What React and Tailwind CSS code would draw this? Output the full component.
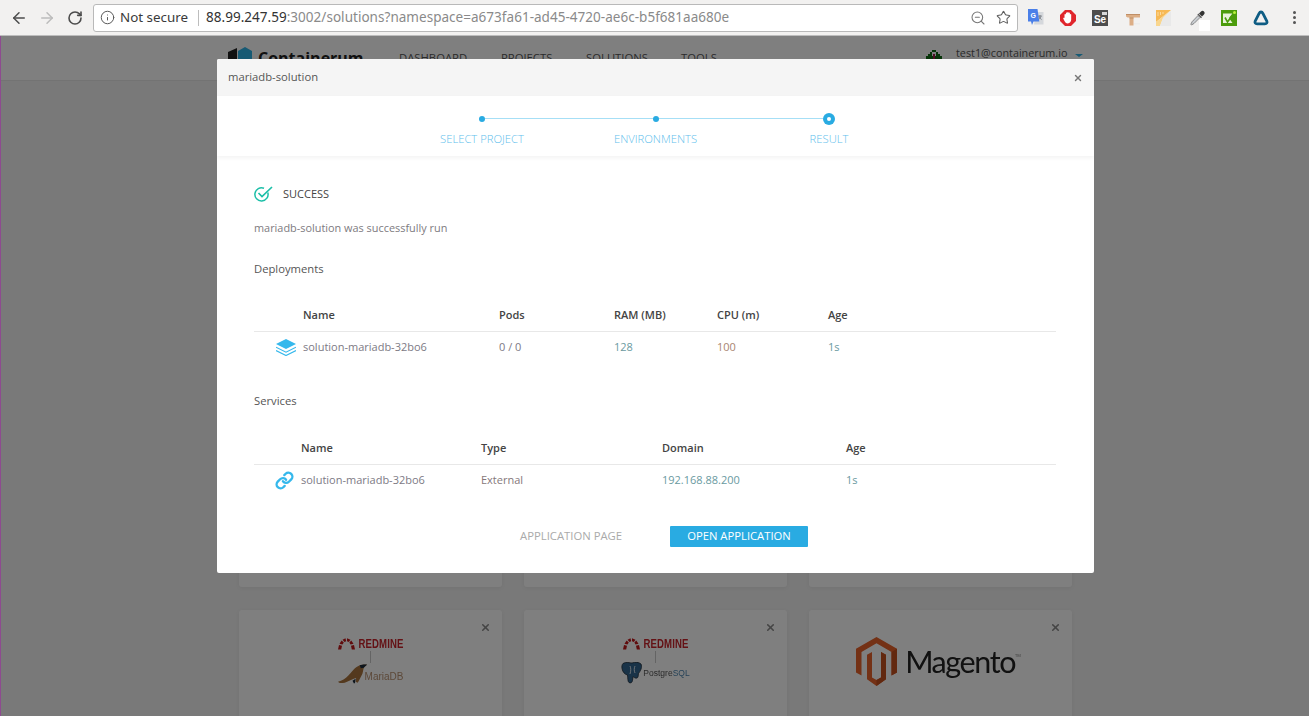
import { ArrowLeft, ArrowRight, RotateCw, Info, ZoomOut, Star, X, Link } from 'lucide-react'

const NAV = [
  { label: 'DASHBOARD', cls: 'w-[102px]' },
  { label: 'PROJECTS', cls: 'w-[85px]' },
  { label: 'SOLUTIONS', cls: 'w-[95px]' },
  { label: 'TOOLS', cls: 'w-[60px]' },
]

const STEPS = [
  { label: 'SELECT PROJECT', left: false, right: true },
  { label: 'ENVIRONMENTS', left: true, right: true },
  { label: 'RESULT', left: true, right: false, current: true },
]

function Extensions() {
  return (
    <div className="flex items-center ml-[10px] relative">
      {/* translate */}
      <svg width="16" height="17" viewBox="0 0 16 17">
        <path d="M8 3h7.500v12.500H6z" fill="#d5d8dc" />
        <path d="M10.200 7h3.600M12 6v1M11 7c.3 1.600 1.300 3 2.600 3.600M13 7c-.3 1.600-1.200 3-2.600 3.600" stroke="#7b8087" strokeWidth="0.9" fill="none" />
        <path d="M0 0h9.500l1.800 12.500H5.500L4 16l-1-3.500H0z" fill="#4a7fe8" />
        <text x="2.600" y="9" fontSize="7" fontWeight="700" fill="#fff" fontFamily="'Liberation Sans', sans-serif">G</text>
      </svg>
      {/* blocker */}
      <svg width="16" height="16" viewBox="0 0 16 16" className="ml-[16px]">
        <path d="M5 0h6l5 5v6l-5 5H5l-5-5V5z" fill="#e0262c" />
        <path d="M4.500 8V4.600c0-.9 1.400-.9 1.400 0V3.200c0-.9 1.300-.9 1.300 0V2.600c0-.9 1.400-.9 1.400 0v.6c0-.9 1.300-.9 1.300 0v1.400c0-.9 1.300-.9 1.300 0v5c0 2.200-1.500 3.800-3.400 3.800-1.700 0-2.600-.9-3.300-2.400L3.300 8.800c-.4-.9.700-1.500 1.200-.8z" fill="#fff" />
      </svg>
      {/* selenium */}
      <div className="ml-[16px] w-4 h-4 bg-[#4d4d4d] relative flex items-end justify-center overflow-hidden">
        <span className="text-white text-[10px] leading-[13px] font-bold font-['Liberation_Sans',sans-serif]">Se</span>
        <span className="absolute right-[1px] top-[2px] w-[5px] h-[3px] bg-[#d9d9d9]" />
      </div>
      {/* wood sign */}
      <svg width="16" height="16" viewBox="0 0 16 16" className="ml-[17px]">
        <path d="M1 4h14v3.500H8.500v8H4.500v-8H2.500L1 6.500z" fill="#dcae86" />
        <path d="M1 4h14v1H1zM4.500 7.500h4v1h-4z" fill="#c08f66" />
        <path d="M9 13h6v1.500H9z" fill="#ececec" />
      </svg>
      {/* notes */}
      <svg width="16" height="16" viewBox="0 0 16 16" className="ml-[15px]">
        <path d="M0 0h15L0 12z" fill="#f7b955" />
        <path d="M0 12 15 0l-8 8-3 8H0z" fill="#f9d68e" />
        <path d="M15 1v15H4l3-8z" fill="#e9e9e9" />
        <path d="M2 2v4M4.500 2v3M7 2v2" stroke="#fbe2b5" strokeWidth="0.8" />
      </svg>
      {/* eyedropper */}
      <svg width="16" height="16" viewBox="0 0 16 16" className="ml-[18px]">
        <path d="M11 1.500a2 2 0 0 1 3 3l-2 2-3-3z" fill="#333" />
        <path d="M8.400 3.600l3.600 3.600-1 1-3.600-3.600z" fill="#555" />
        <path d="M8 5.500 10 7.500 4 13.500 1.500 15 .8 14.200 2.200 11.600z" fill="#c9cdd1" stroke="#666" strokeWidth="0.7" />
      </svg>
      <span className="absolute left-[171px] top-[11px] w-[11px] h-[11px] bg-white" />
      {/* green tick */}
      <svg width="16" height="16" viewBox="0 0 16 16" className="ml-[15px]">
        <rect width="16" height="16" fill="#4c9c0c" />
        <path d="M2 3.500h9.500L8 8l3.500 5H2z" fill="#e8f3da" />
        <path d="M4 7.500 6.500 12 13 3" fill="none" stroke="#4c9c0c" strokeWidth="1.600" />
        <circle cx="13.500" cy="2.500" r="1.500" fill="#b8f03c" />
      </svg>
      {/* triangle */}
      <svg width="16" height="16" viewBox="0 0 16 16" className="ml-[16px]">
        <path d="M8 2c1 0 1.500.6 2 1.600l3.800 7.400c.7 1.500-.1 2.800-1.900 2.800H4.100c-1.800 0-2.600-1.300-1.900-2.800L6 3.600C6.500 2.600 7 2 8 2z" fill="none" stroke="#0f5d84" strokeWidth="2.800" />
      </svg>
      {/* menu */}
      <div className="ml-[24px] flex flex-col gap-[2px]">
        <span className="w-[3px] h-[3px] rounded-full bg-[#555]" />
        <span className="w-[3px] h-[3px] rounded-full bg-[#555]" />
        <span className="w-[3px] h-[3px] rounded-full bg-[#555]" />
      </div>
    </div>
  )
}

function BrowserBar() {
  return (
    <div className="h-9 bg-[#f2f1f0] border-b border-[#bdbdbd] flex items-center font-['Noto_Sans',sans-serif]">
      <ArrowLeft size={18} strokeWidth={2} className="ml-[10px] text-[#4c4c4c]" />
      <ArrowRight size={18} strokeWidth={2} className="ml-[10px] text-[#bcbcbc]" />
      <RotateCw size={16} strokeWidth={2.4} className="ml-[11px] text-[#4c4c4c]" />
      <div className="ml-[10px] w-[925px] h-[28px] bg-white border border-[#b9b9b9] rounded-[3px] flex items-center">
        <Info size={15} strokeWidth={1.6} className="ml-[6px] text-[#5a5a5a]" />
        <span className="ml-[5px] text-[13.4px] text-[#3a3a3a] w-[78px]">Not secure</span>
        <span className="w-px h-[16px] bg-[#bdbdbd]" />
        <span className="ml-[7px] text-[13.5px] text-[#8a8a8a] whitespace-nowrap tracking-[0.03px]">
          <span className="text-[#333]">88.99.247.59</span>:3002/solutions?namespace=a673fa61-ad45-4720-ae6c-b5f681aa680e
        </span>
        <ZoomOut size={16} strokeWidth={1.6} className="ml-auto text-[#777]" />
        <Star size={15} strokeWidth={1.7} className="ml-[10px] mr-[6px] text-[#5f5f5f]" />
      </div>
      <Extensions />
    </div>
  )
}

function RedmineMark() {
  return (
    <div className="flex items-center gap-[4px] h-[13px]">
      <svg width="17" height="13" viewBox="0 0 17 13">
        <path d="M0 12.500 1 8l3 .8-.8 3.700zM1.500 6.800 3.600 3.600 5.800 5.600 4.500 7.600zM4.500 2.800 7.500 1.200 8.200 4.200 6.500 4.900zM9 1.200 12.500 2.800 10.800 4.900 9 4.200zM13.300 3.600 15.500 6.800 12.500 7.600 11.400 5.600zM16 8 17 12.500H13.800L13 8.800z" fill="#c1181b" />
      </svg>
      <span className="text-[9.6px] leading-none font-bold text-[#c8232a] tracking-[0.1px] font-['Liberation_Sans',sans-serif] scale-y-125">REDMINE</span>
    </div>
  )
}

function Connector() {
  return <span className="w-px h-[12px] bg-[#c9c9c9] my-[1px]" />
}

function MariaLogo() {
  return (
    <div className="flex flex-col items-center pt-[27px] blur-[0.5px]">
      <RedmineMark />
      <Connector />
      <div className="flex items-end -mt-[1px]">
        <svg width="29" height="21" viewBox="0 0 28 20">
          <path d="M0 18c4-1 7-3 10-6 3-3 6-8 11-10 2-.6 5-1 7-.6-1 1.500-2.500 2-3 3-1 2-.5 5-2.500 8-1 2-2 4-3.500 6.500l-2-1 .5-3.500c-4 1-7 3-11 4.500C3 19.500 1 19.500 0 18z" fill="#a8733c" />
          <path d="M21 2c2-.6 5-1 7-.6-1 1.500-2.500 2-3 3l-3 .5z" fill="#1a2a3a" />
          <path d="M14 17l1.500 3 1-1.500.5-3.500z" fill="#1a2a3a" />
        </svg>
        <span className="text-[10px] leading-[15px] text-[#b99272] font-['Liberation_Sans',sans-serif] -ml-[2px]">MariaDB</span>
      </div>
    </div>
  )
}

function PostgresLogo() {
  return (
    <div className="flex flex-col items-center pt-[27px] blur-[0.5px]">
      <RedmineMark />
      <Connector />
      <div className="flex items-center gap-[1px] -mt-[2px]">
        <svg width="21" height="22" viewBox="0 0 21 22">
          <path d="M2 1.500C5-.5 9 1 11 1c3-1 7-1 9 1 1.500 3-.5 7-2.500 9.500-.5 2 0 4-1.500 4.500-1.500.500-3-.5-4-1.500l-.5 4c-.2 2-2 3-3.500 2-1.500-1-1-5-1.500-7.500C4 12.500 1.500 10 1 6.500.7 4.500 1 2.500 2 1.500z" fill="#336791" stroke="#1f2c38" strokeWidth="0.8" />
          <path d="M9 4c1 2 1 5 0 8M14 4c-1 2-1 5 0 7" stroke="#fff" strokeWidth="0.800" fill="none" />
        </svg>
        <span className="text-[8.5px] leading-none text-[#555] font-['Liberation_Sans',sans-serif]">Postgre<span className="text-[#4f86b0]">SQL</span></span>
      </div>
    </div>
  )
}

function MagentoLogo() {
  return (
    <div className="flex items-center justify-center gap-[8px] pt-[27px] pr-[4px] blur-[0.3px]">
      <svg width="41" height="49" viewBox="0 0 41 49">
        <path d="M20.500 0 41 11.800V35.500l-5.500 3V15L20.500 6.300 5.500 15v23.500L0 35.500V11.800z" fill="#e8622a" />
        <path d="M11 17.800l5-2.800v25.500l4.500 2.500 4.500-2.500V15l5 2.800v24.500L20.500 49 11 42.300z" fill="#e8622a" />
        <path d="M20.500 49V43l4.500-2.500V15l5 2.800v24.500zM35.500 38.500V15L41 11.800v23.700z" fill="#c4501f" />
      </svg>
      <div className="flex items-start">
        <span className="text-[30.5px] leading-none tracking-[-1.4px] text-[#222] font-['Lato',sans-serif]">Magento</span>
        <span className="mt-[8px] text-[4px] leading-none text-[#777]">TM</span>
      </div>
    </div>
  )
}

function Card({ children }) {
  return (
    <div className="relative h-[241px] bg-white rounded-[3px] shadow-[0_1px_4px_rgba(0,0,0,0.06)]">
      <X size={11} strokeWidth={3.4} className="absolute right-[11px] top-[12px] text-[#8a8a8a]" />
      {children}
    </div>
  )
}

function AppPage() {
  return (
    <div className="h-full bg-[#f2f2f2] overflow-hidden font-['Open_Sans',sans-serif]">
      <div className="h-[45px] bg-white border-b border-[#e6e6e6]">
        <div className="ml-[227px] flex items-center h-full pb-[1px]">
          <svg width="25" height="24" viewBox="0 0 25 24" className="mt-[3px]">
            <path d="M0 5 9 1v20l-9-4z" fill="#222" />
            <path d="M10 4l7-4 7 4v16l-7 4-7-4z" fill="#2fb4e9" />
          </svg>
          <span className="ml-[5px] w-[141px] text-[16px] font-bold text-[#222]">Containerum</span>
          {NAV.map(n => (
            <span key={n.label} className={`${n.cls} text-[11.3px] text-[#555] mt-[1px]`}>{n.label}</span>
          ))}
          <svg width="20" height="20" viewBox="0 0 10 10" className="ml-[183px] mt-[1px]" shapeRendering="crispEdges">
            <path d="M4 1h2v1H4zM3 2h1v1H3zM6 2h1v1H6zM2 3h2v1H2zM6 3h2v1H6zM1 4h8v2H1zM1 6h3v4H1zM6 6h3v4H6z" fill="#0f6b12" />
            <path d="M4.500 3h1v3h-1z" fill="#a01d4d" />
          </svg>
          <span className="ml-[12px] text-[10.8px] text-[#555] -mt-[9px]">test1@containerum.io</span>
          <span className="ml-[8px] -mt-[4px] w-0 h-0 border-x-[4px] border-x-transparent border-t-[3px] border-t-[#2fb4e9]" />
        </div>
      </div>
      <div className="ml-[238px] w-[833px] pt-px grid grid-cols-3 gap-x-[22px] gap-y-[23px]">
        {[0, 1, 2, 3, 4, 5].map(i => <Card key={i} />)}
        <Card><MariaLogo /></Card>
        <Card><PostgresLogo /></Card>
        <Card><MagentoLogo /></Card>
      </div>
    </div>
  )
}

function Stepper() {
  return (
    <div className="h-[60px] bg-white shadow-[0_2px_4px_rgba(0,0,0,0.05)] relative flex justify-center">
      <div className="w-[520.5px] grid grid-cols-3 pt-[15px]">
        {STEPS.map(s => (
          <div key={s.label} className="flex flex-col items-center">
            <div className="w-full h-[15px] flex items-center">
              <span className={`flex-1 h-px ${s.left ? 'bg-[#a6dff6]' : ''}`} />
              {s.current ? (
                <span className="w-[12px] h-[12px] rounded-full bg-[#29abe2] flex items-center justify-center">
                  <span className="w-[4px] h-[4px] bg-white rounded-full" />
                </span>
              ) : (
                <span className="w-[6px] h-[6px] rounded-full bg-[#29abe2]" />
              )}
              <span className={`flex-1 h-px ${s.right ? 'bg-[#a6dff6]' : ''}`} />
            </div>
            <span className="mt-[5px] text-[11.25px] leading-[16px] font-light text-[#62c0ec] whitespace-nowrap">{s.label}</span>
          </div>
        ))}
      </div>
    </div>
  )
}

function Table({ cols, heads, icon, cells, iconPad }) {
  return (
    <div className="text-[11px]">
      <div className={`grid ${cols} h-[32px] items-center border-b border-[#e8e8e8] font-semibold text-[#444]`}>
        <span />
        {heads.map(h => <span key={h}>{h}</span>)}
      </div>
      <div className={`grid ${cols} h-[31px] items-center`}>
        <span className={`flex justify-end ${iconPad}`}>{icon}</span>
        {cells.map(c => <span key={c.text} className={c.cls}>{c.text}</span>)}
      </div>
    </div>
  )
}

function LayersIcon() {
  return (
    <svg width="20" height="17" viewBox="0 0 20 17">
      <path d="M10 0l10 5-10 5L0 5z" fill="#35b8ec" />
      <path d="M0 8.200l10 5 10-5M0 11.500l10 5 10-5" fill="none" stroke="#35b8ec" strokeWidth="1.200" />
    </svg>
  )
}

function SuccessIcon() {
  return (
    <svg width="19" height="16" viewBox="0 0 19 16" fill="none" stroke="#1cbfa8" strokeWidth="1.500">
      <path d="M13.800 6.500A6.600 6.600 0 1 1 10 2.300" />
      <path d="M4.500 7 8 10.500 18 1" strokeWidth="1.700" />
    </svg>
  )
}

function Modal() {
  return (
    <div className="ml-px mt-[23px] w-[877px] h-[514px] bg-white rounded-[2px] overflow-hidden font-['Open_Sans',sans-serif]">
      <div className="h-[37px] bg-[#f5f5f5] flex items-center justify-between pl-[11px] pr-[11px]">
        <span className="text-[11.25px] text-[#555]">mariadb-solution</span>
        <X size={10} strokeWidth={3.4} className="text-[#777]" />
      </div>
      <Stepper />
      <div className="pl-[37px] pr-[38px]">
        <div className="mt-[28px] h-[20px] flex items-center">
          <SuccessIcon />
          <span className="ml-[10px] text-[11px] text-[#444]">SUCCESS</span>
        </div>
        <p className="mt-[16px] h-[16px] leading-[16px] text-[10.9px] text-[#7d7a80]">mariadb-solution was successfully run</p>
        <p className="mt-[25px] h-[16px] leading-[16px] text-[11.25px] text-[#555]">Deployments</p>
        <div className="mt-[23px]">
          <Table
            cols="grid-cols-[49px_196px_115px_103px_111px_1fr]"
            heads={['Name', 'Pods', 'RAM (MB)', 'CPU (m)', 'Age']}
            icon={<LayersIcon />}
            iconPad="pr-[7px]"
            cells={[
              { text: 'solution-mariadb-32bo6', cls: 'text-[#7d7a85]' },
              { text: '0 / 0', cls: 'text-[#7d7a85]' },
              { text: '128', cls: 'text-[#6a9a9f]' },
              { text: '100', cls: 'text-[#a88570]' },
              { text: '1s', cls: 'text-[#6a9a9f]' },
            ]}
          />
        </div>
        <p className="mt-[30px] h-[16px] leading-[16px] text-[11.25px] text-[#555]">Services</p>
        <div className="mt-[24px]">
          <Table
            cols="grid-cols-[47px_180px_181px_184px_1fr]"
            heads={['Name', 'Type', 'Domain', 'Age']}
            icon={<Link size={19} strokeWidth={3} className="text-[#35b8ec]" />}
            iconPad="pr-[7px]"
            cells={[
              { text: 'solution-mariadb-32bo6', cls: 'text-[#7d7a85]' },
              { text: 'External', cls: 'text-[#85787a]' },
              { text: '192.168.88.200', cls: 'text-[#6a9a9f]' },
              { text: '1s', cls: 'text-[#6a9a9f]' },
            ]}
          />
        </div>
        <div className="mt-[30px] flex items-center">
          <span className="ml-[266px] w-[150px] text-[11.3px] text-[#aaa]">APPLICATION PAGE</span>
          <button className="w-[138px] h-[21px] bg-[#29abe2] rounded-[1px] text-[11.25px] text-white">OPEN APPLICATION</button>
        </div>
      </div>
    </div>
  )
}

export default function App() {
  return (
    <div className="w-[1309px] h-[716px] overflow-hidden flex flex-col bg-white">
      <BrowserBar />
      <div className="flex-1 min-h-0 flex">
        <div className="w-px bg-[#8e4a90]" />
        <div className="flex-1 relative min-w-0">
          <AppPage />
          <div className="absolute inset-0 bg-black/50 flex justify-center items-start">
            <Modal />
          </div>
        </div>
      </div>
    </div>
  )
}
